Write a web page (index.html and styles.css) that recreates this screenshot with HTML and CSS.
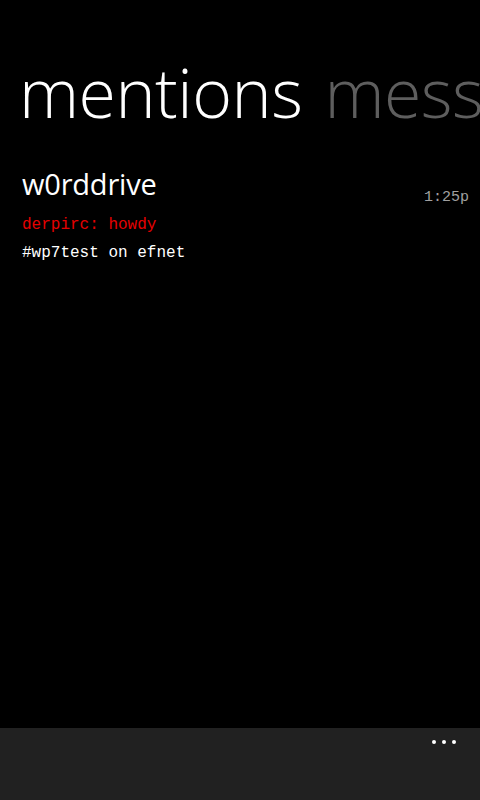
FILE: index.html
```html
<!DOCTYPE html>
<html>
<head>
<meta charset="utf-8">
<link rel="stylesheet" href="styles.css">
</head>
<body>
<div class="app">
  <header class="pivot">
    <span class="pivot-item active">mentions</span>
    <span class="pivot-item">messages</span>
  </header>
  <main class="list">
    <div class="item">
      <div class="item-main">
        <div class="nick">w0rddrive</div>
        <div class="msg">derpirc: howdy</div>
        <div class="channel">#wp7test on efnet</div>
      </div>
      <div class="time">1:25p</div>
    </div>
  </main>
  <footer class="appbar">
    <div class="dots"><span></span><span></span><span></span></div>
  </footer>
</div>
</body>
</html>
```
FILE: styles.css
```css
html, body {
  margin: 0;
  padding: 0;
  background: #000;
  width: 480px;
  height: 800px;
  overflow: hidden;
}
.app {
  width: 480px;
  height: 800px;
  display: flex;
  flex-direction: column;
  font-family: "Open Sans", sans-serif;
  color: #fff;
}
.pivot {
  display: flex;
  gap: 22px;
  padding: 44px 0 0 19px;
  white-space: nowrap;
  overflow: hidden;
  flex: none;
}
.pivot-item {
  font-size: 68px;
  font-weight: 300;
  line-height: 96px;
  letter-spacing: -0.5px;
  color: #5e5e5e;
}
.pivot-item.active { color: #fff; }
.list {
  flex: 1;
  padding: 26px 11px 0 22px;
}
.item {
  display: flex;
  justify-content: space-between;
  align-items: flex-start;
}
.nick {
  font-size: 29px;
  font-weight: 400;
  line-height: 36px;
  letter-spacing: -0.2px;
  margin-bottom: 9px;
}
.msg, .channel, .time {
  font-family: "Liberation Mono", monospace;
  font-size: 16px;
  line-height: 28px;
}
.msg { color: #e50000; }
.channel { color: #fff; }
.time {
  color: #a0a0a0;
  font-size: 15px;
  margin-top: 18px;
}
.appbar {
  flex: none;
  height: 72px;
  background: #212121;
  display: flex;
  justify-content: flex-end;
  align-items: flex-start;
  padding: 12px 24px 0 0;
  box-sizing: border-box;
}
.dots { display: flex; gap: 6px; }
.dots span {
  width: 4px;
  height: 4px;
  border-radius: 50%;
  background: #fff;
}
```
